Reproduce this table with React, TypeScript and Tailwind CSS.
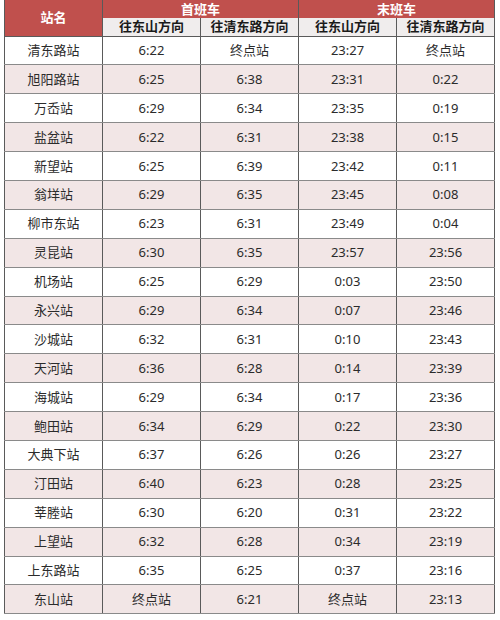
const rows: [string, string, string, string, string][] = [
  ['清东路站', '6:22', '终点站', '23:27', '终点站'],
  ['旭阳路站', '6:25', '6:38', '23:31', '0:22'],
  ['万岙站', '6:29', '6:34', '23:35', '0:19'],
  ['盐盆站', '6:22', '6:31', '23:38', '0:15'],
  ['新望站', '6:25', '6:39', '23:42', '0:11'],
  ['翁垟站', '6:29', '6:35', '23:45', '0:08'],
  ['柳市东站', '6:23', '6:31', '23:49', '0:04'],
  ['灵昆站', '6:30', '6:35', '23:57', '23:56'],
  ['机场站', '6:25', '6:29', '0:03', '23:50'],
  ['永兴站', '6:29', '6:34', '0:07', '23:46'],
  ['沙城站', '6:32', '6:31', '0:10', '23:43'],
  ['天河站', '6:36', '6:28', '0:14', '23:39'],
  ['海城站', '6:29', '6:34', '0:17', '23:36'],
  ['鲍田站', '6:34', '6:29', '0:22', '23:30'],
  ['大典下站', '6:37', '6:26', '0:26', '23:27'],
  ['汀田站', '6:40', '6:23', '0:28', '23:25'],
  ['莘塍站', '6:30', '6:20', '0:31', '23:22'],
  ['上望站', '6:32', '6:28', '0:34', '23:19'],
  ['上东路站', '6:35', '6:25', '0:37', '23:16'],
  ['东山站', '终点站', '6:21', '终点站', '23:13'],
];

export default function App() {
  return (
    <div className="h-[620px] w-[500px] bg-white pl-[4px] font-['Noto_Sans','Noto_Sans_CJK_SC',sans-serif] text-[13px] text-[#2b2b2b]">
      <table className="w-[491px] table-fixed border-collapse text-center">
        <thead>
          <tr className="h-[18px]">
            <th
              rowSpan={2}
              className="border-x border-b border-[#5a5a5a] bg-[#c0504d] text-[13px] font-bold leading-none text-white"
            >
              站名
            </th>
            <th colSpan={2} className="border-x border-[#5a5a5a] bg-[#c0504d] text-[13px] font-bold leading-none text-white">
              首班车
            </th>
            <th colSpan={2} className="border-x border-[#5a5a5a] bg-[#c0504d] text-[13px] font-bold leading-none text-white">
              末班车
            </th>
          </tr>
          <tr className="h-[18px] bg-[#f0eded]">
            {['往东山方向', '往清东路方向', '往东山方向', '往清东路方向'].map((t, i) => (
              <th key={i} className="border-x border-b border-[#5a5a5a] text-[13px] font-bold leading-none text-[#1a1a1a]">
                {t}
              </th>
            ))}
          </tr>
        </thead>
        <tbody>
          {rows.map((r, i) => (
            <tr key={r[0]} className={`h-[28.9px] ${i % 2 === 1 ? 'bg-[#f2e6e6]' : 'bg-white'}`}>
              {r.map((c, j) => (
                <td key={j} className="border border-x-[#5a5a5a] border-y-[#8a8a8a] p-0 leading-none">
                  {c}
                </td>
              ))}
            </tr>
          ))}
        </tbody>
      </table>
    </div>
  );
}
